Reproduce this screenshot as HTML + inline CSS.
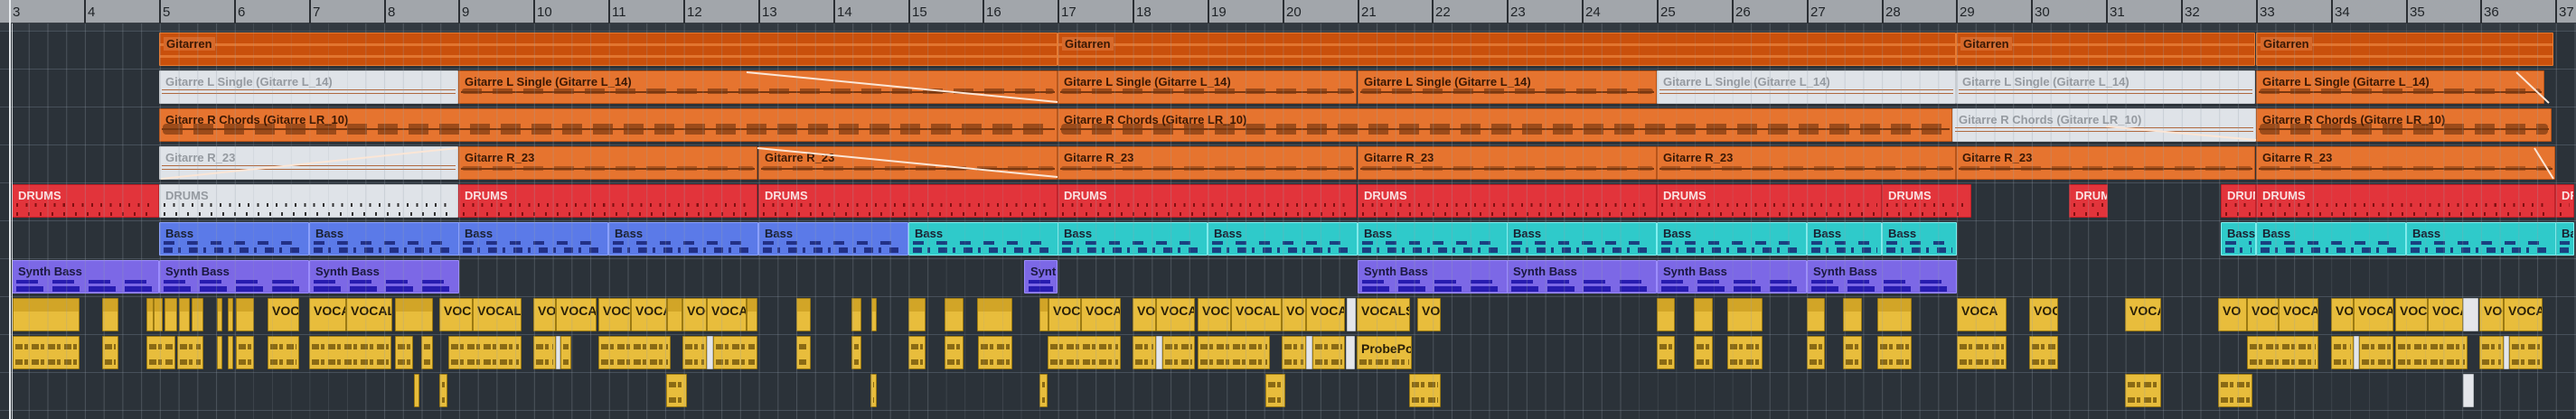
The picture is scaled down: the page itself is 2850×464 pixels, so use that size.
<!DOCTYPE html>
<html><head><meta charset="utf-8"><style>
*{margin:0;padding:0;box-sizing:border-box}
body{width:2850px;height:464px;overflow:hidden;background:#2b3239;position:relative;font-family:"Liberation Sans Narrow","Liberation Sans",sans-serif}
#ruler{position:absolute;left:0;top:0;width:2850px;height:26px;background:#a2a6ab;border-bottom:1px solid #3a3f45}
#band{position:absolute;left:0;top:26px;width:2850px;height:9px;background:#323940}
.bt{position:absolute;top:0;height:26px;border-left:2px solid #2a2e33}
.bl{position:absolute;top:5px;font-size:15px;color:#1e2226;font-family:"Liberation Sans",sans-serif}
.hl{position:absolute;left:0;width:2850px;height:1px;background:#47505a}
#grid{position:absolute;left:0;top:26px;width:2850px;height:438px;pointer-events:none;
background-image:repeating-linear-gradient(90deg,rgba(150,160,170,.28) 0 1px,transparent 1px 20.7125px);background-position:11px 0}
.ev{position:absolute;height:37px;overflow:hidden;border:1px solid rgba(0,0,0,.35);border-radius:1px}
.ev span{position:absolute;left:6px;top:4px;font-size:13px;font-weight:bold;white-space:nowrap}
.or{background:#e6742f;border-color:#b85418}
.or span{color:#3a1804}
.wh{background:#dfe3e8;border-color:#c8ccd0}
.wh span{color:#959aa0}
.fo{background:#c9500c;border-color:#e87a30}
.fo span{color:#3a1804;background:#d6692a;padding:0 3px;left:4px}
.rd{background:#e2343b;border-color:#c02028}
.rd span{color:#fbe2e2}
.bl2{background:#5b7ae8;border-color:#8aa0ff}
.cy{background:#2fcaca;border-color:#7ef0f0}
.bl2 span,.cy span{color:#1a2030}
.pu{background:#7c68e6;border-color:#9c8cff}
.pu span{color:#1a1840}
.ye{background:#e8bd3c;border:1px solid #9c7a12}
.ye span{color:#2a2008;left:4px;top:5px;font-size:14px}
.yw{background:#e4e6ea;border:1px solid #b8bcc0}
.wave{position:absolute;left:2px;right:2px;top:22px;height:2px;background:#7a3810}
.wv2{position:absolute;left:3px;right:3px;top:17px;height:9px;border-radius:4px;background:repeating-linear-gradient(90deg,rgba(122,56,16,.85) 0 22px,transparent 22px 34px);opacity:.8}
.wvw{position:absolute;left:2px;right:2px;top:20px;height:5px;border-top:1px solid #b06a40;border-bottom:1px solid #b06a40}
.notes{position:absolute;left:4px;right:4px;top:26px;height:6px;background:repeating-linear-gradient(90deg,rgba(20,30,110,.8) 0 10px,transparent 10px 16px,rgba(20,30,110,.8) 16px 19px,transparent 19px 28px)}
.notes2{position:absolute;left:4px;right:4px;top:20px;height:4px;background:repeating-linear-gradient(90deg,rgba(20,30,110,.8) 0 12px,transparent 12px 26px)}
.dr{position:absolute;left:4px;right:4px;top:20px;height:4px;background:repeating-linear-gradient(90deg,rgba(90,0,0,.7) 0 2px,transparent 2px 10.35px)}
.dr2{position:absolute;left:4px;right:4px;top:30px;height:4px;background:repeating-linear-gradient(90deg,rgba(90,0,0,.7) 0 2px,transparent 2px 13px)}
.vw{position:absolute;left:2px;right:2px;height:6px;background:repeating-linear-gradient(90deg,#8a6a14 0 8px,transparent 8px 10px,#8a6a14 10px 14px,transparent 14px 18px)}
.vt{position:absolute;left:0;right:0;top:0;height:14px;background:rgba(170,120,0,.35)}
.fstr{position:absolute;left:0;right:0;height:3px;background:#e2752f}
</style></head><body>
<div id="ruler"></div><div id="band"></div>
<div id="root"></div>
<div id="grid"></div>
<svg style="position:absolute;left:0;top:0" width="2850" height="464">
<g stroke="#fbe6d6" stroke-width="2" fill="none">
<line x1="826" y1="80" x2="1170" y2="113"/>
<line x1="838" y1="164" x2="1170" y2="196"/>
<line x1="178" y1="198" x2="506" y2="164"/>
<line x1="2330" y1="140" x2="2496" y2="155"/>
<line x1="2784" y1="80" x2="2820" y2="114"/>
<line x1="2804" y1="164" x2="2825" y2="198"/>
</g></svg>
<div style="position:absolute;left:10px;top:0;width:2px;height:464px;background:#e8ecef"></div>
<div style="position:absolute;left:13px;top:26px;width:1px;height:438px;background:#c8ccd0"></div>
<script>
function X(b){return 176+(b-5)*82.85;}
var ruler=document.getElementById('ruler'),root=document.getElementById('root'),h='';
for(var b=3;b<=37;b++){var x=Math.round(X(b));h+='<div class="bt" style="left:'+x+'px"></div><div class="bl" style="left:'+(x+4)+'px">'+b+'</div>';}
ruler.innerHTML=h;h='';
for(var k=0;k<11;k++){h+='<div class="hl" style="top:'+(34+42*k)+'px"></div>';}
function ev(x1,x2,y,cls,label,inner){
 return '<div class="ev '+cls+'" style="left:'+Math.round(x1)+'px;width:'+Math.round(x2-x1)+'px;top:'+y+'px">'+(inner||'')+(label?'<span>'+label+'</span>':'')+'</div>';}
var T=[36,78,120,162,204,246,288,330,372,414];
[[5,17],[17,29],[29,33],[33,36.97]].forEach(function(s){h+=ev(X(s[0]),X(s[1]),T[0],'fo','Gitarren','<div class="fstr" style="top:11px"></div><div class="fstr" style="top:24px"></div>');});
var GL='Gitarre L Single (Gitarre L_14)';
[[5,9,'wh'],[9,17,'or'],[17,21,'or'],[21,25,'or'],[25,29,'wh'],[29,33,'wh'],[33,36.85,'or']].forEach(function(s){h+=ev(X(s[0]),X(s[1]),T[1],s[2],GL,s[2]=='or'?'<div class="wave"></div><div class="wv2" style="top:19px;height:6px"></div>':'<div class="wvw"></div>');});
var GC='Gitarre R Chords (Gitarre LR_10)';
[[5,17,'or'],[17,28.95,'or'],[28.95,33,'wh'],[33,36.95,'or']].forEach(function(s){h+=ev(X(s[0]),X(s[1]),T[2],s[2],GC,s[2]=='or'?'<div class="wave" style="top:21px"></div><div class="wv2" style="top:16px;height:12px"></div>':'<div class="wvw"></div>');});
[[5,9,'wh'],[9,13,'or'],[13,17,'or'],[17,21,'or'],[21,25,'or'],[25,29,'or'],[29,33,'or'],[33,37,'or']].forEach(function(s){h+=ev(X(s[0]),X(s[1]),T[3],s[2],'Gitarre R_23',s[2]=='or'?'<div class="wave" style="top:23px"></div><div class="wv2" style="top:21px;height:5px;opacity:.6"></div>':'<div class="wvw"></div>');});
var D=[[1,5,'rd'],[5,9,'wh'],[9,13,'rd'],[13,17,'rd'],[17,21,'rd'],[21,25,'rd'],[25,28,'rd'],[28,29.2,'rd'],[30.5,31.02,'rd'],[32.53,33,'rd'],[33,37,'rd'],[37,38.1,'rd']];
D.forEach(function(s){var x1=s[0]==1?13:X(s[0]);h+=ev(x1,Math.min(X(s[1]),2848),T[4],s[2],'DRUMS',s[2]=='wh'?'<div class="dr" style="background:repeating-linear-gradient(90deg,#333 0 2px,transparent 2px 10.35px)"></div><div class="dr2" style="background:repeating-linear-gradient(90deg,#333 0 2px,transparent 2px 13px)"></div>':'<div class="dr"></div><div class="dr2"></div>');});
var B=[[5,7,'bl2'],[7,9,'bl2'],[9,11,'bl2'],[11,13,'bl2'],[13,15,'bl2'],[15,17,'cy'],[17,19,'cy'],[19,21,'cy'],[21,23,'cy'],[23,25,'cy'],[25,27,'cy'],[27,28,'cy'],[28,29,'cy'],[32.53,33,'cy'],[33,35,'cy'],[35,37,'cy'],[37,38.1,'cy']];
B.forEach(function(s){h+=ev(X(s[0]),Math.min(X(s[1]),2848),T[5],s[2],'Bass','<div class="notes2" style="top:20px"></div><div class="notes" style="top:27px"></div>');});
var S=[[1,5],[5,7],[7,9],[16.55,17],[21,23],[23,25],[25,27],[27,29]];
S.forEach(function(s){var x1=s[0]==1?13:X(s[0]);h+=ev(x1,X(s[1]),T[6],'pu',(X(s[1])-x1)>50?'Synth Bass':'Synth B','<div class="notes2" style="top:21px;background:repeating-linear-gradient(90deg,rgba(30,20,170,.9) 0 24px,transparent 24px 40px)"></div><div class="notes" style="top:28px;background:repeating-linear-gradient(90deg,rgba(30,20,170,.9) 0 30px,transparent 30px 40px)"></div>');});
var V1=[[14,88,''],[113,131,''],[162,170,''],[170,180,''],[182,196,''],[198,210,''],[212,225,''],[240,246,''],[252,258,''],[261,281,''],[296,331,'VOCA'],[342,383,'VOCAL'],[383,434,'VOCAL'],[437,479,''],[486,523,'VOCA'],[523,577,'VOCALS'],[590,615,'VOC'],[615,660,'VOCALS'],[662,698,'VOCA'],[698,738,'VOCAL'],[738,755,''],[755,782,'VOC'],[782,826,'VOCALS'],[826,838,''],[881,897,''],[942,953,''],[964,970,''],[1005,1024,''],[1045,1066,''],[1081,1120,''],[1150,1160,''],[1160,1196,'VOCA'],[1196,1240,'VOCALS'],[1253,1279,'VOC'],[1279,1322,'VOCALS'],[1325,1362,'VOCA'],[1362,1418,'VOCAL'],[1418,1445,'VOC'],[1445,1488,'VOCALS'],[1501,1560,'VOCALS'],[1568,1594,'VOC'],[1833,1853,''],[1874,1895,''],[1911,1950,''],[1999,2019,''],[2039,2060,''],[2077,2115,''],[2165,2220,'VOCA'],[2245,2277,'VOCA'],[2351,2391,'VOCAL'],[2454,2486,'VO'],[2486,2521,'VOCA'],[2521,2565,'VOCALS'],[2579,2604,'VOC'],[2604,2648,'VOCALS'],[2650,2686,'VOCA'],[2686,2725,'VOCAL'],[2743,2770,'VOC'],[2770,2813,'VOCALS']];
V1.forEach(function(s){h+=ev(s[0],s[1],T[7],'ye',s[2],s[2]?'':'<div class="vt"></div>');});
h+=ev(1490,1500,T[7],'yw','');h+=ev(2725,2742,T[7],'yw','');
var V2=[[14,88],[113,131],[162,194],[196,225],[240,246],[252,258],[261,281],[296,331],[342,433],[437,457],[466,479],[496,577],[590,615],[620,632],[662,742],[755,782],[789,838],[881,897],[942,953],[1005,1024],[1045,1066],[1082,1120],[1159,1240],[1253,1279],[1286,1322],[1325,1405],[1418,1445],[1452,1488],[1833,1853],[1874,1895],[1911,1950],[1999,2019],[2039,2060],[2077,2115],[2165,2220],[2245,2277],[2486,2565],[2579,2604],[2610,2648],[2650,2730],[2743,2770],[2776,2813]];
V2.forEach(function(s){h+=ev(s[0],s[1],T[8],'ye','','<div class="vw" style="top:8px"></div><div class="vw" style="top:25px"></div>');});
[[615,620],[782,789],[1279,1286],[1445,1452],[1489,1499],[2604,2610],[2770,2776]].forEach(function(s){h+=ev(s[0],s[1],T[8],'yw','');});
h+=ev(1501,1562,T[8],'ye','ProbePodc','<div class="vw" style="top:25px"></div>');
var V3=[[458,464],[486,495],[737,760],[963,970],[1150,1159],[1400,1422],[1559,1594],[2351,2391],[2454,2492]];
V3.forEach(function(s){h+=ev(s[0],s[1],T[9],'ye','','<div class="vw" style="top:8px"></div><div class="vw" style="top:25px"></div>');});
h+=ev(2725,2737,T[9],'yw','');
root.innerHTML=h;
</script>
</body></html>
